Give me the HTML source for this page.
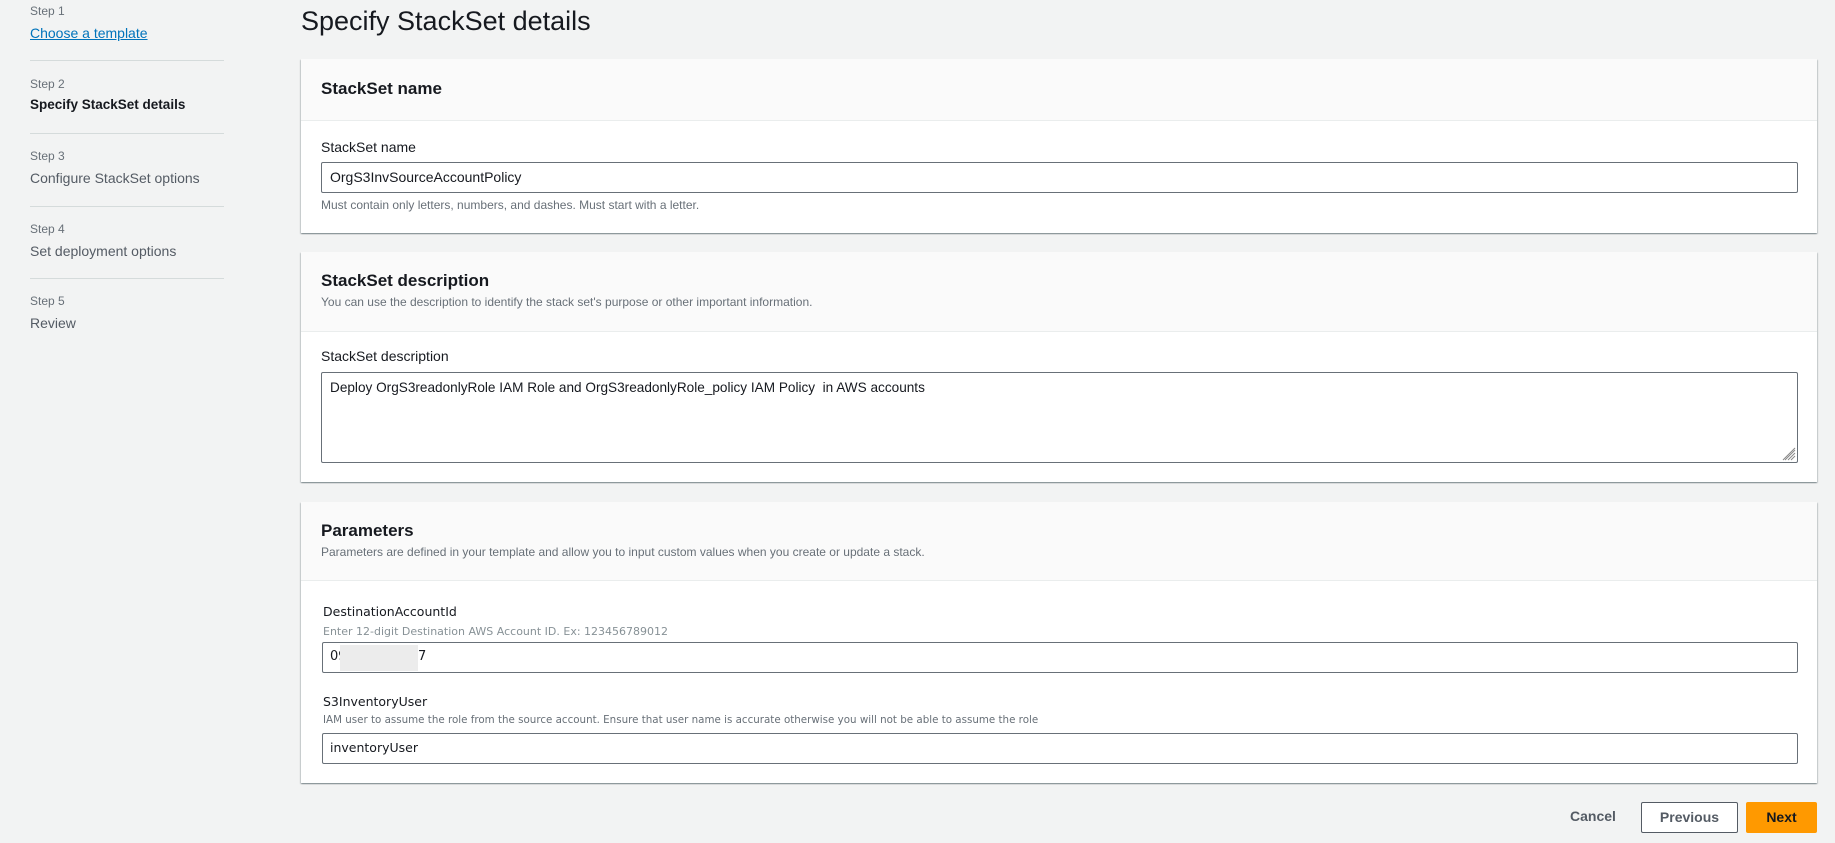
<!DOCTYPE html>
<html><head><meta charset="utf-8"><style>
*{box-sizing:border-box;margin:0;padding:0}
body{width:1835px;height:843px;background:#f2f3f3;font-family:"Liberation Sans",sans-serif;color:#16191f;position:relative;overflow:hidden}
.a{position:absolute;white-space:nowrap}
.step{font-size:12px;color:#687078}
.side{font-size:14px;color:#545b64}
.hr{position:absolute;left:30px;width:194px;height:1px;background:#d5dbdb}
.card{position:absolute;left:301px;width:1516px;background:#fff;box-shadow:0 1px 1px rgba(0,28,36,.3),1px 1px 1px rgba(0,28,36,.15),-1px 1px 1px rgba(0,28,36,.15)}
.hd{position:absolute;left:0;top:0;width:100%;background:#fafafa;border-bottom:1px solid #eaeded}
.h2{font-size:17px;font-weight:bold}
.lbl{font-size:14px}
.hint{font-size:12px;color:#687078}
.inp{position:absolute;left:20px;width:1477px;border:1px solid #687078;border-radius:2px;background:#fff;font-size:14px}
.p{font-family:"DejaVu Sans",sans-serif}
</style></head><body>
<div class="a step" style="left:30px;top:4px">Step 1</div>
<div class="a" style="left:30px;top:25px;font-size:14px;color:#0073bb;text-decoration:underline">Choose a template</div>
<div class="hr" style="top:60px"></div>
<div class="a step" style="left:30px;top:77px">Step 2</div>
<div class="a" style="left:30px;top:97px;font-size:13.5px;font-weight:bold">Specify StackSet details</div>
<div class="hr" style="top:133px"></div>
<div class="a step" style="left:30px;top:149px">Step 3</div>
<div class="a side" style="left:30px;top:170px">Configure StackSet options</div>
<div class="hr" style="top:206px"></div>
<div class="a step" style="left:30px;top:222px">Step 4</div>
<div class="a side" style="left:30px;top:243px">Set deployment options</div>
<div class="hr" style="top:278px"></div>
<div class="a step" style="left:30px;top:294px">Step 5</div>
<div class="a side" style="left:30px;top:315px">Review</div>

<div class="a" style="left:301px;top:6px;font-size:27px">Specify StackSet details</div>

<div class="card" style="top:59px;height:174px">
 <div class="hd" style="height:62px"></div>
 <div class="a h2" style="left:20px;top:20px">StackSet name</div>
 <div class="a lbl" style="left:20px;top:80px">StackSet name</div>
 <div class="inp" style="top:103px;height:31px;line-height:29px"><span class="a" style="left:8px">OrgS3InvSourceAccountPolicy</span></div>
 <div class="a hint" style="left:20px;top:139px">Must contain only letters, numbers, and dashes. Must start with a letter.</div>
</div>

<div class="card" style="top:252px;height:230px">
 <div class="hd" style="height:80px"></div>
 <div class="a h2" style="left:20px;top:19px">StackSet description</div>
 <div class="a hint" style="left:20px;top:43px">You can use the description to identify the stack set's purpose or other important information.</div>
 <div class="a lbl" style="left:20px;top:96px">StackSet description</div>
 <div class="inp" style="top:120px;height:91px">
  <span class="a" style="left:8px;top:7px;font-size:13.6px">Deploy OrgS3readonlyRole IAM Role and OrgS3readonlyRole_policy IAM Policy &nbsp;in AWS accounts</span>
  <svg class="a" style="right:1px;bottom:1px" width="14" height="14"><g stroke="#888" stroke-width="1"><line x1="13" y1="3" x2="3" y2="13"/><line x1="13" y1="6" x2="6" y2="13"/><line x1="13" y1="9" x2="9" y2="13"/><line x1="13" y1="1" x2="1" y2="13"/></g></svg>
 </div>
</div>

<div class="card" style="top:502px;height:281px">
 <div class="hd" style="height:79px"></div>
 <div class="a h2" style="left:20px;top:19px">Parameters</div>
 <div class="a hint" style="left:20px;top:43px">Parameters are defined in your template and allow you to input custom values when you create or update a stack.</div>
</div>
<div class="a p" style="left:323px;top:604px;font-size:12.5px">DestinationAccountId</div>
<div class="a p" style="left:323px;top:625px;font-size:11px;color:#879196">Enter 12-digit Destination AWS Account ID. Ex: 123456789012</div>
<div class="a" style="left:322px;top:642px;width:1476px;height:31px;border:1px solid #687078;border-radius:2px;background:#fff"></div>
<div class="a p" style="left:330px;top:649px;font-size:13px">09</div>
<div class="a" style="left:340px;top:645px;width:78px;height:26px;background:#ececec"></div>
<div class="a p" style="left:418px;top:649px;font-size:13px">7</div>
<div class="a p" style="left:323px;top:694px;font-size:12.5px">S3InventoryUser</div>
<div class="a p" style="left:323px;top:714px;font-size:10.3px;color:#687078">IAM user to assume the role from the source account. Ensure that user name is accurate otherwise you will not be able to assume the role</div>
<div class="a" style="left:322px;top:733px;width:1476px;height:31px;border:1px solid #687078;border-radius:2px;background:#fff"></div>
<div class="a p" style="left:330px;top:740px;font-size:12.5px">inventoryUser</div>

<div class="a" style="left:1570px;top:808px;font-size:14px;font-weight:bold;color:#545b64">Cancel</div>
<div class="a" style="left:1641px;top:802px;width:97px;height:31px;border:1px solid #545b64;border-radius:2px;background:#fff;font-size:14px;font-weight:bold;color:#545b64;text-align:center;line-height:29px">Previous</div>
<div class="a" style="left:1746px;top:802px;width:71px;height:31px;border-radius:2px;background:#ff9900;font-size:14px;font-weight:bold;color:#16191f;text-align:center;line-height:31px">Next</div>
</body></html>
